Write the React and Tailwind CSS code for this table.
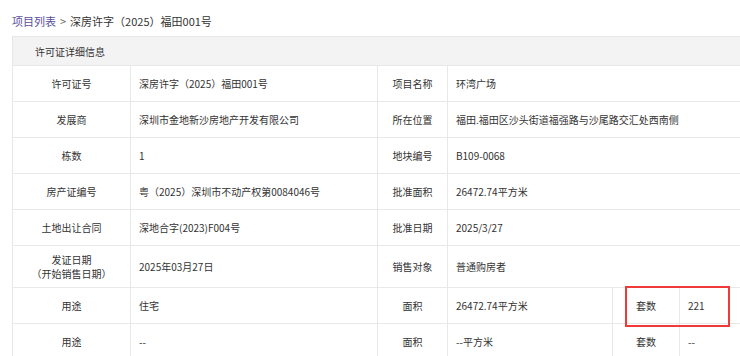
import React from "react";

const rows = [
  ["许可证号", "深房许字（2025）福田001号", "项目名称", "环湾广场"],
  ["发展商", "深圳市金地新沙房地产开发有限公司", "所在位置", "福田.福田区沙头街道福强路与沙尾路交汇处西南侧"],
  ["栋数", "1", "地块编号", "B109-0068"],
  ["房产证编号", "粤（2025）深圳市不动产权第0084046号", "批准面积", "26472.74平方米"],
  ["土地出让合同", "深地合字(2023)F004号", "批准日期", "2025/3/27"],
];

const usage = [
  { use: "住宅", area: "26472.74平方米", count: "221" },
  { use: "--", area: "--平方米", count: "--" },
];

const cell = "border border-[#e8e8e8] px-2";
const label = "border border-[#e8e8e8] text-center";

export default function App() {
  return (
    <div
      className="relative w-[740px] h-[356px] overflow-hidden bg-white text-[#333] [text-spacing-trim:space-all]"
      style={{ fontFamily: '"Noto Sans CJK SC", "Noto Sans", sans-serif' }}
    >
      {/* breadcrumb */}
      <div className="h-9 pl-3 pt-3 text-[11px] leading-[18px]">
        <span className="text-[#5b4f9e]">项目列表</span>
        <span className="mx-1 text-[#666]">&gt;</span>
        <span>深房许字（2025）福田001号</span>
      </div>

      <table className="ml-3 w-[787px] table-fixed border-collapse text-[10px]">
        <colgroup>
          <col className="w-[118px]" />
          <col className="w-[247px]" />
          <col className="w-[70px]" />
          <col className="w-[165px]" />
          <col className="w-[67px]" />
          <col className="w-[120px]" />
        </colgroup>
        <tbody>
          <tr className="h-[29px] bg-[#f3f3f3]">
            <td colSpan={6} className="border border-[#e8e8e8] pl-[22px]">
              许可证详细信息
            </td>
          </tr>
          {rows.map((r) => (
            <tr key={r[0]} className="h-9">
              <td className={label}>{r[0]}</td>
              <td className={cell}>{r[1]}</td>
              <td className={label}>{r[2]}</td>
              <td className={cell} colSpan={3}>{r[3]}</td>
            </tr>
          ))}
          <tr className="h-[42px]">
            <td className={label + " leading-[14px]"}>
              <div>发证日期</div>
              <div>（开始销售日期）</div>
            </td>
            <td className={cell}>2025年03月27日</td>
            <td className={label}>销售对象</td>
            <td className={cell} colSpan={3}>普通购房者</td>
          </tr>
          {usage.map((u, i) => (
            <tr key={i} className="h-9">
              <td className={label}>用途</td>
              <td className={cell}>{u.use}</td>
              <td className={label}>面积</td>
              <td className={cell}>{u.area}</td>
              <td className={label}>套数</td>
              <td className={cell}>{u.count}</td>
            </tr>
          ))}
        </tbody>
      </table>

      {/* highlight annotation */}
      <div className="absolute left-[625px] top-[286px] w-[105px] h-[41px] border-2 border-[#f03a3a]"></div>
    </div>
  );
}
